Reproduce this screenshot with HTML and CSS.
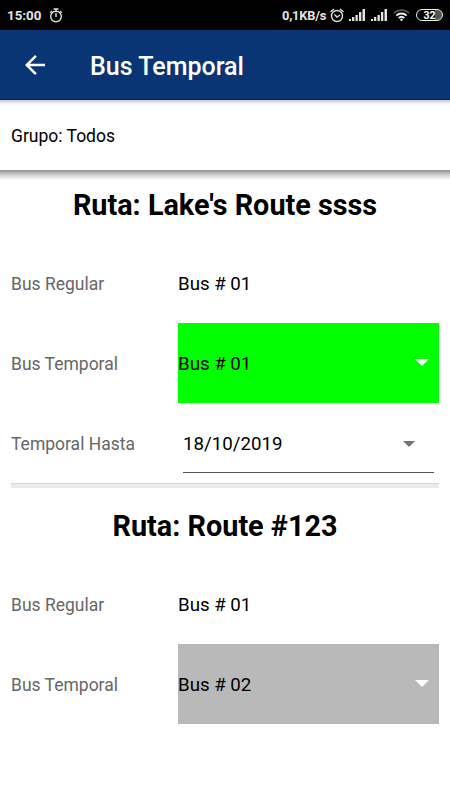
FILE: index.html
```html
<!DOCTYPE html>
<html lang="es">
<head>
    <meta charset="UTF-8">
    <meta name="viewport" content="width=device-width, initial-scale=1.0">
    <title>Bus Temporal</title>
    <link rel="stylesheet" href="styles.css">
</head>
<body>
    <div class="status-bar">
        <span class="time">15:00</span>
        <svg width="14" height="15" viewBox="0 0 14 15" fill="none" stroke="#ddd" stroke-width="1.4">
            <circle cx="7" cy="8.5" r="5.3"/>
            <path d="M4.500 1h5M7 1v2M7 5v4M11 3l1.800 1.800M3 3L1.200 4.800"/>
        </svg>
        <div class="status-icons">
            <span class="speed">0,1KB/s</span>
            <svg width="14" height="15" viewBox="0 0 14 15" fill="none" stroke="#ddd" stroke-width="1.4">
                <circle cx="7" cy="8" r="5.500"/>
                <path d="M4.500 6.500L7 9l3-2M.5 4l3.500-3M13.500 4L10 1"/>
            </svg>
            <svg class="signal" width="17" height="12" viewBox="0 0 17 12" fill="#e4e4e4">
                <path d="M0 10h2v2H0zM3 8h2.300v4H3zM6.500 6h2.300v6H6.500zM10 3h2.300v9H10zM13.500 0h2.500v12h-2.500z"/>
            </svg>
            <svg class="signal" width="17" height="12" viewBox="0 0 17 12" fill="#e4e4e4">
                <path d="M0 10h2v2H0zM3 8h2.300v4H3zM6.500 6h2.300v6H6.500zM10 3h2.300v9H10zM13.500 0h2.500v12h-2.500z"/>
            </svg>
            <svg class="wifi" width="17" height="12" viewBox="0 0 17 12" fill="none" stroke="#eee" stroke-width="1.8">
                <path d="M.8 4.200a11 11 0 0 1 15.400 0" stroke="#555"/>
                <path d="M3.300 6.600a7.500 7.500 0 0 1 10.400 0M5.700 9a4.200 4.200 0 0 1 5.600 0"/>
                <circle cx="8.500" cy="10.800" r="1.200" fill="#eee" stroke="none"/>
            </svg>
            <span class="battery">32</span>
        </div>
    </div>

    <header class="toolbar">
        <svg class="back" width="30" height="30" viewBox="0 0 24 24" fill="#fff">
            <path d="M20 11H7.830l5.590-5.590L12 4l-8 8 8 8 1.410-1.410L7.830 13H20v-2z"/>
        </svg>
        <h1>Bus Temporal</h1>
    </header>

    <div class="group">Grupo: Todos</div>
    <div class="group-shadow"></div>

    <section class="route">
        <h2>Ruta: Lake's Route ssss</h2>
        <div class="row">
            <span class="label">Bus Regular</span>
            <span class="value">Bus # 01</span>
        </div>
        <div class="row">
            <span class="label">Bus Temporal</span>
            <div class="value select green">Bus # 01<i class="arrow"></i></div>
        </div>
        <div class="row">
            <span class="label">Temporal Hasta</span>
            <div class="value date">18/10/2019<i class="arrow"></i></div>
        </div>
    </section>

    <div class="divider"></div>

    <section class="route">
        <h2>Ruta: Route #123</h2>
        <div class="row">
            <span class="label">Bus Regular</span>
            <span class="value">Bus # 01</span>
        </div>
        <div class="row">
            <span class="label">Bus Temporal</span>
            <div class="value select gray">Bus # 02<i class="arrow"></i></div>
        </div>
    </section>
</body>
</html>
```
FILE: styles.css
```css
* {
    box-sizing: border-box;
}
body {
    margin: 0;
    height: 800px;
    overflow: hidden;
    background: #fff;
    color: #000;
    font-family: Roboto, "Liberation Sans", sans-serif;
}
h1, h2 {
    margin: 0;
}
.status-bar {
    display: flex;
    align-items: center;
    height: 30px;
    padding: 0 7px;
    background: #000;
    color: #e4e4e4;
    font-size: 13px;
    font-weight: 500;
}
.time {
    width: 42px;
    font-size: 13.3px;
    font-weight: 700;
}
.status-icons {
    display: flex;
    align-items: center;
    margin-left: auto;
}
.speed {
    width: 48px;
    font-size: 12.8px;
    font-weight: 700;
    letter-spacing: -0.2px;
    white-space: nowrap;
}
.signal {
    margin-left: 5px;
}
.wifi {
    margin-left: 5px;
}
.battery {
    width: 27px;
    height: 12px;
    margin-left: 6px;
    border: 1px solid #eee;
    border-radius: 6px;
    background: linear-gradient(90deg, #000 72%, #555 72%);
    color: #fff;
    font-size: 10.5px;
    font-weight: 700;
    line-height: 11px;
    text-align: center;
}
.toolbar {
    display: flex;
    align-items: center;
    height: 70px;
    padding-left: 20px;
    border-bottom: 1px solid #04205f;
    background: #0a3575;
    color: #fff;
}
.toolbar h1 {
    margin: 3px 0 0 40px;
    font-size: 25px;
    font-weight: 500;
}
.group {
    height: 70px;
    padding-left: 11px;
    background: linear-gradient(#ccc, #fff 5px);
    font-size: 17.5px;
    line-height: 72px;
}
.group-shadow {
    height: 10px;
    margin-bottom: -10px;
    background: linear-gradient(#909090, #ccc 45%, #fff);
}
.route {
    margin: 0 11px;
}
.route h2 {
    height: 73px;
    font-size: 28.8px;
    line-height: 70px;
    text-align: center;
}
.divider {
    height: 5px;
    margin: 0 11px 3px;
    border-top: 1px solid #d8d8d8;
    background: #ebebeb;
}
.row {
    display: flex;
    align-items: center;
    height: 80px;
}
.label {
    width: 167px;
    padding-top: 1px;
    color: #666;
    font-size: 17.5px;
}
.value {
    flex: 1;
    padding-top: 2px;
    font-size: 18.7px;
}
.select, .date {
    display: flex;
    align-items: center;
    justify-content: space-between;
}
.select {
    height: 80px;
    padding-right: 10px;
}
.green {
    background: #0f0;
}
.gray {
    background: #b9b9b9;
}
.arrow {
    margin-top: -4px;
    border: 7px solid transparent;
    border-top-color: #fff;
    border-bottom: 0;
}
.date {
    height: 59px;
    margin: 0 5px;
    padding-right: 19px;
    border-bottom: 1px solid #555;
}
.date .arrow {
    margin-top: 0;
    border-width: 6px;
    border-bottom-width: 0;
    border-top-color: #737373;
}
```
